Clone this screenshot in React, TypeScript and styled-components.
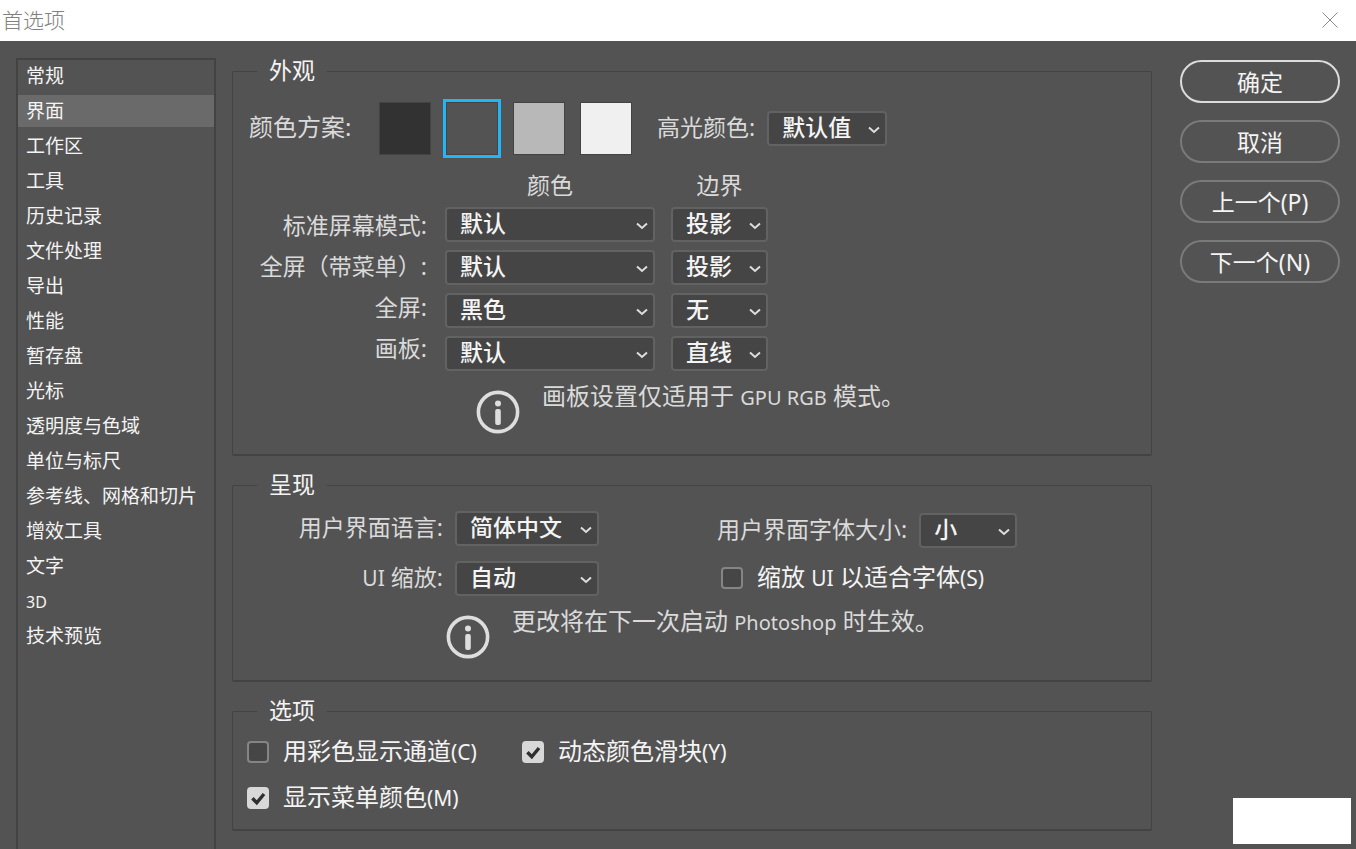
import React, { useId, useState } from "react";
import styled, { createGlobalStyle } from "styled-components";

const GlobalStyle = createGlobalStyle`
  * { box-sizing: border-box; }
  body {
    margin: 0;
    background: #535353;
    font-family: "Noto Sans", "Noto Sans CJK SC", sans-serif;
    color: #f4f4f4;
  }
  button, select, input { font: inherit; color: inherit; margin: 0; }
`;

const Window = styled.div`
  position: relative;
  display: flex;
  flex-direction: column;
  min-height: 100vh;
`;

const TitleBar = styled.header`
  display: flex;
  align-items: center;
  justify-content: space-between;
  height: 41px;
  padding: 0 17px 2px 2px;
  background: #fff;
`;

const Title = styled.h1`
  margin: 0;
  font-size: 21px;
  line-height: 24px;
  font-weight: 300;
  color: #808080;
`;

const CloseButton = styled.button`
  display: flex;
  padding: 0;
  border: 0;
  background: none;
  color: #8a8a8a;
`;

const Body = styled.div`
  flex: 1;
  display: flex;
  padding: 17px 16px 0;
`;

const Sidebar = styled.nav`
  flex: none;
  display: flex;
  flex-direction: column;
  gap: 3px;
  width: 200px;
  margin-right: 16px;
  border: 2px solid #434343;
  border-bottom: 0;
`;

const SidebarItem = styled.button<{ $active: boolean }>`
  flex: none;
  height: 32px;
  padding: 0 8px 1px;
  border: 0;
  background: ${(p) => (p.$active ? "#6a6a6a" : "transparent")};
  font-size: 19px;
  line-height: 24px;
  text-align: left;
`;

const Main = styled.main`
  flex: 1;
  display: flex;
  flex-direction: column;
  gap: 16px;
  min-width: 0;
`;

const Group = styled.fieldset<{ $bottom: number }>`
  min-width: 0;
  margin: 0;
  padding: 0 0 ${(p) => p.$bottom}px 16px;
  border: 1px solid #434343;
  border-bottom-width: 2px;
  border-radius: 2px;
`;

const GroupTitle = styled.legend`
  margin-left: 8px;
  padding: 0 12px 2px;
  font-size: 23px;
  line-height: 24px;
`;

const Label = styled.label`
  padding-bottom: 3px;
  font-size: 23px;
  line-height: 24px;
  color: #dadada;
  white-space: nowrap;
`;

const SchemeRow = styled.div`
  display: flex;
  align-items: center;
  padding-top: 18px;
`;

const SchemeLabel = styled.span`
  width: 130px;
  padding-bottom: 3px;
  font-size: 24px;
  line-height: 24px;
  color: #dadada;
`;

const Swatches = styled.div`
  display: flex;
  gap: 15px;
  margin-right: 25px;
`;

const Swatch = styled.input<{ $color: string }>`
  appearance: none;
  width: 52px;
  height: 53px;
  border: 1px solid #434343;
  background: ${(p) => p.$color};
  &:checked { outline: 3px solid #24b5f6; }
`;

const SelectBox = styled.span<{ $width: number }>`
  position: relative;
  display: block;
  flex: none;
  width: ${(p) => p.$width}px;
  height: 35px;
`;

const NativeSelect = styled.select`
  appearance: none;
  display: block;
  width: 100%;
  height: 35px;
  padding: 0 24px 4px 13px;
  border: 2px solid #626262;
  border-radius: 4px;
  background: #454545;
  font-size: 23px;
  font-weight: 500;
  line-height: 26px;
`;

const Chevron = styled.svg`
  position: absolute;
  right: 7px;
  top: 15px;
  pointer-events: none;
`;

const ModeColumns = styled.div`
  display: flex;
  margin-top: 16px;
`;

const ModeLabels = styled.div`
  display: flex;
  flex-direction: column;
  width: 178px;
  margin-right: 18px;
  padding-top: 34px;
`;

const ModeLabel = styled(Label)`
  padding-bottom: 0;
  line-height: 41px;
  text-align: right;
`;

const ModeColumn = styled.div`
  display: flex;
  flex-direction: column;
  gap: 8px;
  margin-right: 16px;
`;

const ColumnTitle = styled.span`
  font-size: 23px;
  line-height: 28px;
  color: #dadada;
  text-align: center;
`;

const Note = styled.div<{ $indent: number }>`
  display: flex;
  gap: 22px;
  margin-top: 13px;
  padding-left: ${(p) => p.$indent}px;
  color: #dadada;
`;

const NoteIcon = styled.svg`
  flex: none;
  margin-top: 6px;
`;

const NoteText = styled.p`
  margin: 0;
  font-size: 24px;
  line-height: 24px;
`;

const Latin = styled.span<{ $size?: number }>`
  font-size: ${(p) => p.$size ?? 21}px;
  line-height: 1;
`;

const RenderColumns = styled.div`
  display: flex;
  gap: 118px;
`;

const RenderColumn = styled.div<{ $top: number; $gap: number }>`
  display: flex;
  flex-direction: column;
  gap: ${(p) => p.$gap}px;
  padding-top: ${(p) => p.$top}px;
`;

const Field = styled.div`
  display: flex;
  justify-content: flex-end;
  align-items: center;
  gap: 12px;
`;

const RenderField = styled(Field)`
  width: 350px;
`;

const CheckLabel = styled.label`
  display: flex;
  align-items: center;
  gap: 14px;
  height: 24px;
  font-size: 24px;
  line-height: 24px;
  white-space: nowrap;
`;

const CheckText = styled.span`
  padding-bottom: 2px;
`;

const CheckInput = styled.input`
  appearance: none;
  position: absolute;
  inset: 0;
  border: 2px solid #858585;
  border-radius: 4px;
  background: #464646;
  &:checked { border-color: #d8d8d8; background: #d8d8d8; }
`;

const CheckFrame = styled.span`
  position: relative;
  flex: none;
  width: 22px;
  height: 22px;
`;

const CheckMark = styled.svg`
  position: absolute;
  inset: 0;
  pointer-events: none;
`;

const Indented = styled.div`
  padding-left: 4px;
`;

const OptionGrid = styled.div`
  display: grid;
  grid-template-columns: 275px 1fr;
  row-gap: 22px;
  margin-left: -2px;
  padding-top: 16px;
`;

const Actions = styled.div`
  flex: none;
  display: flex;
  flex-direction: column;
  gap: 17px;
  width: 160px;
  margin: 2px 0 0 28px;
`;

const ActionButton = styled.button<{ $primary?: boolean }>`
  height: 43px;
  padding: 0;
  border: 2px solid ${(p) => (p.$primary ? "#dcdcdc" : "#7a7a7a")};
  border-radius: 22px;
  background: transparent;
  font-size: 23px;
  line-height: 24px;
`;

const BlankPatch = styled.div`
  position: absolute;
  right: 5px;
  bottom: 5px;
  width: 118px;
  height: 46px;
  background: #fff;
`;

type DropdownProps = { id?: string; label?: string; width: number; value: string };

function Dropdown({ id, label, width, value }: DropdownProps) {
  return (
    <SelectBox $width={width}>
      <NativeSelect id={id} aria-label={label} defaultValue={value}>
        <option>{value}</option>
      </NativeSelect>
      <Chevron width="12" height="8" viewBox="0 0 12 8" fill="none" stroke="#dedede" strokeWidth="2">
        <path d="M1 1.5 L6 6 L11 1.5" />
      </Chevron>
    </SelectBox>
  );
}

function Check({ checked = false, children }: { checked?: boolean; children: React.ReactNode }) {
  const [on, setOn] = useState(checked);
  return (
    <CheckLabel>
      <CheckFrame>
        <CheckInput type="checkbox" checked={on} onChange={(e) => setOn(e.target.checked)} />
        {on && (
          <CheckMark width="22" height="22" viewBox="0 0 22 22" fill="none" stroke="#2f2f2f" strokeWidth="3.4">
            <path d="M5.4 11.2 L9.8 15.8 L17 7" />
          </CheckMark>
        )}
      </CheckFrame>
      <CheckText>{children}</CheckText>
    </CheckLabel>
  );
}

function Info({ indent, children }: { indent: number; children: React.ReactNode }) {
  return (
    <Note $indent={indent}>
      <NoteIcon width="44" height="44" viewBox="0 0 44 44" fill="none" aria-hidden="true">
        <circle cx="22" cy="22" r="19.6" stroke="#dedede" strokeWidth="3.6" />
        <circle cx="22" cy="13.6" r="3" fill="#dedede" />
        <rect x="19.2" y="19" width="5.6" height="16" rx="2" fill="#dedede" />
      </NoteIcon>
      <NoteText>{children}</NoteText>
    </Note>
  );
}

const sections: React.ReactNode[] = [
  "常规", "界面", "工作区", "工具", "历史记录", "文件处理", "导出", "性能", "暂存盘", "光标",
  "透明度与色域", "单位与标尺", "参考线、网格和切片", "增效工具", "文字",
  <Latin key="3d" $size={16}>3D</Latin>, "技术预览",
];

const schemes = [
  { name: "深灰", color: "#323232" },
  { name: "中灰", color: "#535353" },
  { name: "浅灰", color: "#b8b8b8" },
  { name: "白色", color: "#f0f0f0" },
];

const modes = [
  { label: "标准屏幕模式:", color: "默认", edge: "投影" },
  { label: "全屏（带菜单）:", color: "默认", edge: "投影" },
  { label: "全屏:", color: "黑色", edge: "无" },
  { label: "画板:", color: "默认", edge: "直线" },
];

export default function App() {
  const id = useId();
  const [active, setActive] = useState(1);

  return (
    <Window>
      <GlobalStyle />
      <TitleBar>
        <Title>首选项</Title>
        <CloseButton aria-label="关闭">
          <svg width="18" height="18" viewBox="0 0 18 18" fill="none" stroke="currentColor">
            <path d="M1.5 1.5 L16.5 16.5 M16.5 1.5 L1.5 16.5" />
          </svg>
        </CloseButton>
      </TitleBar>
      <Body>
        <Sidebar>
          {sections.map((name, i) => (
            <SidebarItem key={i} $active={i === active} onClick={() => setActive(i)}>
              {name}
            </SidebarItem>
          ))}
        </Sidebar>
        <Main>
          <Group $bottom={20}>
            <GroupTitle>外观</GroupTitle>
            <SchemeRow>
              <SchemeLabel>颜色方案:</SchemeLabel>
              <Swatches role="radiogroup" aria-label="颜色方案">
                {schemes.map((s) => (
                  <Swatch
                    key={s.color}
                    type="radio"
                    name="scheme"
                    aria-label={s.name}
                    $color={s.color}
                    defaultChecked={s.color === "#535353"}
                  />
                ))}
              </Swatches>
              <Field>
                <Label htmlFor={id + "highlight"}>高光颜色:</Label>
                <Dropdown id={id + "highlight"} width={120} value="默认值" />
              </Field>
            </SchemeRow>
            <ModeColumns>
              <ModeLabels>
                {modes.map((m, i) => (
                  <ModeLabel key={m.label} htmlFor={id + "mode" + i}>{m.label}</ModeLabel>
                ))}
              </ModeLabels>
              <ModeColumn>
                <ColumnTitle>颜色</ColumnTitle>
                {modes.map((m, i) => (
                  <Dropdown key={m.label} id={id + "mode" + i} width={210} value={m.color} />
                ))}
              </ModeColumn>
              <ModeColumn>
                <ColumnTitle>边界</ColumnTitle>
                {modes.map((m) => (
                  <Dropdown key={m.label} label="边界" width={97} value={m.edge} />
                ))}
              </ModeColumn>
            </ModeColumns>
            <Info indent={227}>
              画板设置仅适用于 <Latin $size={20}>GPU RGB</Latin> 模式。
            </Info>
          </Group>

          <Group $bottom={21}>
            <GroupTitle>呈现</GroupTitle>
            <RenderColumns>
              <RenderColumn $top={13} $gap={15}>
                <RenderField>
                  <Label htmlFor={id + "lang"}>用户界面语言:</Label>
                  <Dropdown id={id + "lang"} width={144} value="简体中文" />
                </RenderField>
                <RenderField>
                  <Label htmlFor={id + "scale"}><Latin>UI</Latin> 缩放:</Label>
                  <Dropdown id={id + "scale"} width={144} value="自动" />
                </RenderField>
              </RenderColumn>
              <RenderColumn $top={15} $gap={18}>
                <Field>
                  <Label htmlFor={id + "size"}>用户界面字体大小:</Label>
                  <Dropdown id={id + "size"} width={98} value="小" />
                </Field>
                <Indented>
                  <Check>缩放 <Latin>UI</Latin> 以适合字体<Latin>(S)</Latin></Check>
                </Indented>
              </RenderColumn>
            </RenderColumns>
            <Info indent={197}>
              更改将在下一次启动 <Latin $size={20}>Photoshop</Latin> 时生效。
            </Info>
          </Group>

          <Group $bottom={19}>
            <GroupTitle>选项</GroupTitle>
            <OptionGrid>
              <Check>用彩色显示通道<Latin>(C)</Latin></Check>
              <Check checked>动态颜色滑块<Latin>(Y)</Latin></Check>
              <Check checked>显示菜单颜色<Latin>(M)</Latin></Check>
            </OptionGrid>
          </Group>
        </Main>
        <Actions>
          <ActionButton $primary>确定</ActionButton>
          <ActionButton>取消</ActionButton>
          <ActionButton>上一个<Latin $size={23}>(P)</Latin></ActionButton>
          <ActionButton>下一个<Latin $size={23}>(N)</Latin></ActionButton>
        </Actions>
      </Body>
      <BlankPatch />
    </Window>
  );
}
